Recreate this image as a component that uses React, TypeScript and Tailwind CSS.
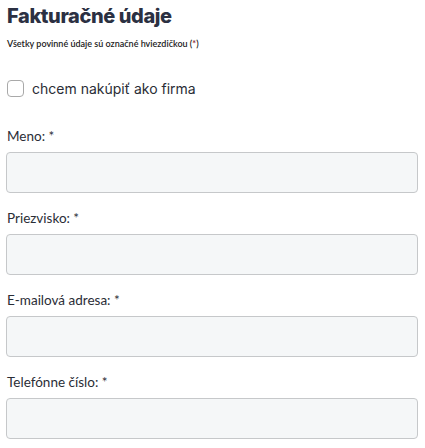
import React from 'react';

const fields = ['Meno: *', 'Priezvisko: *', 'E-mailová adresa: *', 'Telefónne číslo: *'];

const App: React.FC = () => {
  return (
    <div className="w-[425px] h-[448px] bg-white overflow-hidden px-[6px] pt-[3px]" style={{ fontFamily: 'Lato, "Open Sans", sans-serif' }}>
      <h2 className="text-[20px] leading-[26px] font-extrabold text-[#2b3042] ml-[1px] tracking-[-0.4px]" style={{ fontFamily: 'Inter, Lato, sans-serif' }}>
        Fakturačné údaje
      </h2>
      <p className="text-[9px] leading-[12px] font-semibold text-[#222] ml-[1px] mt-[9px]">
        Všetky povinné údaje sú označné hviezdičkou (<span className="text-[#8b1a2b]">*</span>)
      </p>
      <label className="flex items-center mt-[28px] ml-[1px]">
        <input type="checkbox" className="appearance-none w-[17px] h-[17px] rounded-[4px] border border-[#a9a9a9] bg-white" />
        <span className="ml-[8px] text-[14px] text-[#2a2d36]" style={{ fontFamily: 'Inter, Lato, sans-serif' }}>chcem nakúpiť ako firma</span>
      </label>
      <div className="mt-[29px] flex flex-col gap-[17px]">
        {fields.map((f) => (
          <div key={f}>
            <div className="text-[13.5px] leading-[17px] text-[#2a2d36] ml-[1px]">{f}</div>
            <input
              type="text"
              className="mt-[7px] block w-[412px] h-[41px] rounded-[4px] border border-[#c6c8ca] bg-[#f5f7f8]"
            />
          </div>
        ))}
      </div>
    </div>
  );
};

export default App;
